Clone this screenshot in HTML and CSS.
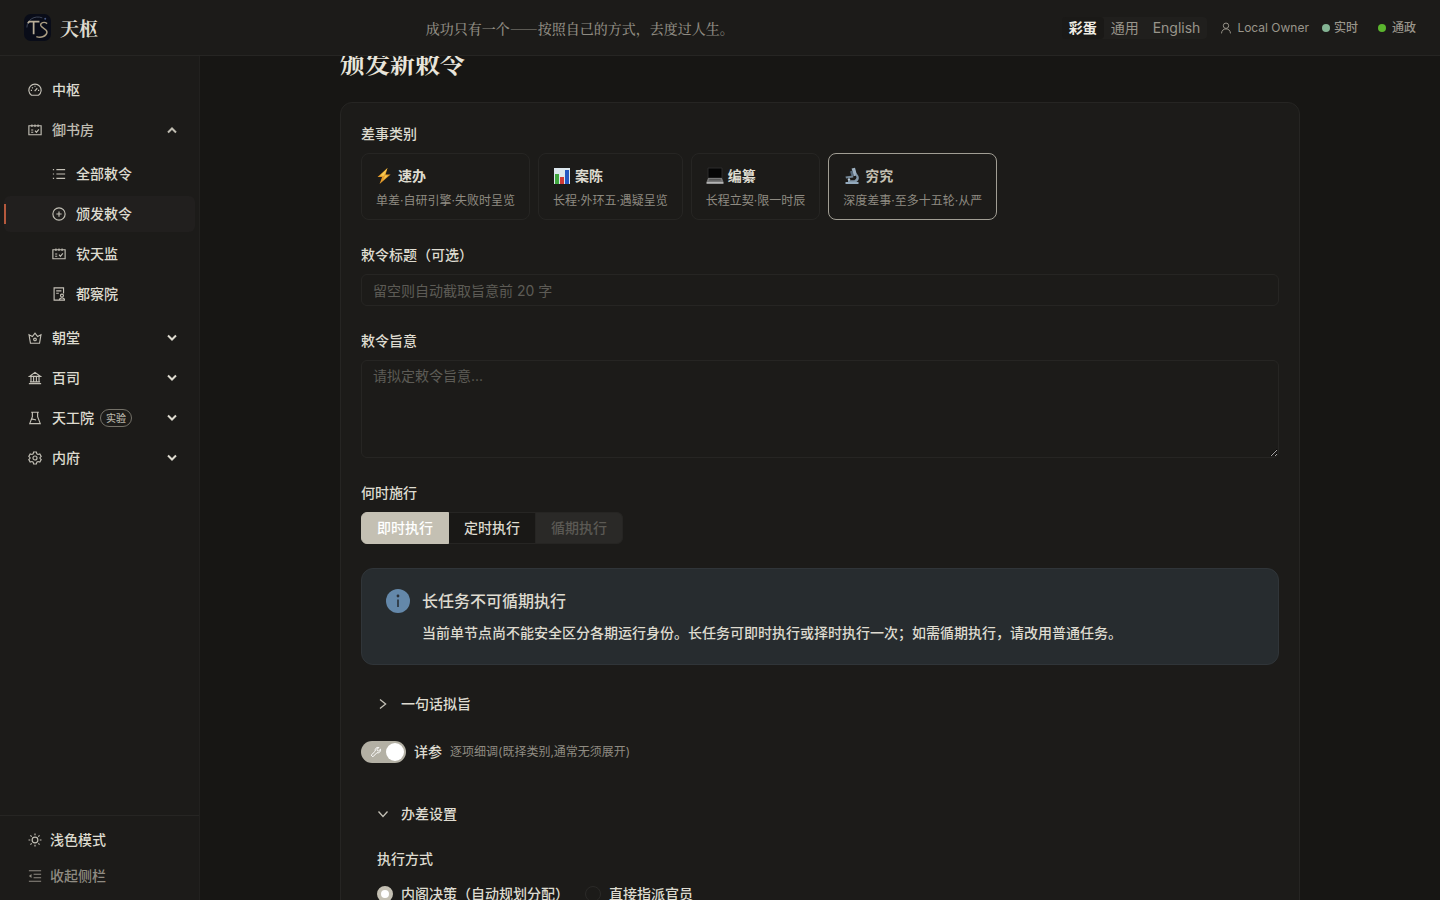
FILE: index.html
```html
<!DOCTYPE html>
<html lang="zh-CN">
<head>
<meta charset="utf-8">
<meta name="viewport" content="width=device-width, initial-scale=1">
<title>天枢 · 颁发新敕令</title>
<link rel="stylesheet" href="styles.css">
</head>
<body>
<svg class="sprite" aria-hidden="true">
  <symbol id="i-dash" viewBox="0 0 16 16"><path d="M4 14A7 7 0 1 1 12 14Z"/><path d="M7.600 9.200 10.600 6M8 3v1.400M3.200 8.400h1.400M11.400 8.400h1.400M4.600 5l1 1"/></symbol>
  <symbol id="i-sched" viewBox="0 0 16 16"><path d="M1 3.200h14v10.200H1zM4.500 1.800v2.800M8 1.800v2.800M11.500 1.800v2.800M3.600 8h2.400M3.600 10.600h2.400M8 8.800l1.600 1.800 2.800-3.400"/></symbol>
  <symbol id="i-list" viewBox="0 0 16 16"><path d="M5 3h10M5 8h10M5 13h10M1 3h1.400M1 8h1.400M1 13h1.400"/></symbol>
  <symbol id="i-plus" viewBox="0 0 16 16"><circle cx="8" cy="8" r="7"/><path d="M8 5v6M5 8h6"/></symbol>
  <symbol id="i-audit" viewBox="0 0 16 16"><path d="M8 15H2.400V1h10.800v6.400M4.800 4.400h6M4.800 7.200h3"/><circle cx="11.400" cy="9.800" r="1.700"/><path d="M8.600 15v-1.200l1.800-1.200h2l1.800 1.200V15Z"/></symbol>
  <symbol id="i-crown" viewBox="0 0 16 16"><path d="M2.800 14 1.200 4.400l3.800 2L8 2.400l3 4 3.800-2L13.200 14Z"/><circle cx="8" cy="9.600" r="1.500"/></symbol>
  <symbol id="i-bank" viewBox="0 0 16 16"><path d="M1.600 6.200 8 1.600l6.400 4.600ZM1 14.400h14M2.200 12.400h11.600M3.400 6.400v6M6.400 6.400v6M9.600 6.400v6M12.600 6.400v6"/></symbol>
  <symbol id="i-flask" viewBox="0 0 16 16"><path d="M3.600 1.400h8.800M5 1.400v5L2 14.400h12l-3-8v-5M4 9.600c2-1 3.400.8 5.200.6"/></symbol>
  <symbol id="i-gear" viewBox="0 0 16 16"><path d="m6.400 1.200h3.200l.5 2 1.400.8 2-.6 1.600 2.800L13.700 7.600v.8l1.400 1.400-1.600 2.800-2-.6-1.400.8-.5 2H6.400l-.5-2-1.400-.8-2 .6L.9 9.800l1.400-1.400v-.8L.9 6.200l1.600-2.800 2 .6 1.400-.8Z"/><circle cx="8" cy="8" r="2.300"/></symbol>
  <symbol id="i-sun" viewBox="0 0 16 16"><circle cx="8" cy="8" r="3.300"/><path d="M8 .6v2M8 13.400v2M.6 8h2M13.400 8h2M2.800 2.800l1.400 1.400M11.800 11.800l1.400 1.400M2.800 13.200l1.400-1.400M11.800 4.200l1.400-1.400"/></symbol>
  <symbol id="i-fold" viewBox="0 0 16 16"><path d="M1 2h14M6.400 6h8.600M6.400 10h8.600M1 14h14"/><path class="solid" d="M1 8l3-2.200v4.400Z"/></symbol>
  <symbol id="i-user" viewBox="0 0 16 16"><circle cx="8" cy="5" r="3.600"/><path d="M2 15.200c.2-3.800 2.600-6 6-6s5.800 2.200 6 6"/></symbol>
  <symbol id="i-down" viewBox="0 0 12 12"><path d="m2 3.500 4 4 4-4"/></symbol>
  <symbol id="i-up" viewBox="0 0 12 12"><path d="m2 8.500 4-4 4 4"/></symbol>
  <symbol id="i-right" viewBox="0 0 12 12"><path d="m3 1.500 5.600 4.500L3 10.500"/></symbol>
  <symbol id="i-expand" viewBox="0 0 12 12"><path d="m1.500 3.500 4.500 5 4.500-5"/></symbol>
  <symbol id="i-tool" viewBox="0 0 16 16"><path d="M1.600 12.200 7 6.800C6.200 4 8.400 1.400 11.800 2L9.400 4.400l.4 1.800 1.800.4L14 4.200c.6 3.400-2 5.600-4.800 4.800l-5.400 5.400Z"/></symbol>
</svg>

<header class="topbar">
  <div class="brand">
    <svg class="logo" viewBox="0 0 28 28" aria-hidden="true">
      <rect width="28" height="28" rx="7" fill="#090c18"/>
      <path d="M3 14C3 6 11 1 19 4" fill="none" stroke="#3f485a" stroke-width="1"/>
      <path d="M4 9.500 5.500 8H16M10 8v13" fill="none" stroke="#b9ae98" stroke-width="1.800"/>
      <path d="M24 10c-3-2.600-7.400-.8-6.600 2 1 2.800 6.800 3.400 6.400 7-.4 4-6 6.200-11 4.400" fill="none" stroke="#a99c82" stroke-width="1.500"/>
      <circle cx="22" cy="5" r="1" fill="#4b5d88"/>
    </svg>
    <span class="brand-name">天枢</span>
  </div>
  <p class="motto">成功只有一个——按照自己的方式，去度过人生。</p>
  <div class="tools">
    <div class="lang">
      <button type="button" class="lang-btn is-active">彩蛋</button>
      <button type="button" class="lang-btn">通用</button>
      <button type="button" class="lang-btn">English</button>
    </div>
    <span class="owner"><svg class="icon"><use href="#i-user"/></svg>Local Owner</span>
    <div class="states">
      <span class="state"><i class="dot dot-live"></i>实时</span>
      <span class="state state-wide"><i class="dot dot-on"></i>通政</span>
    </div>
  </div>
</header>

<div class="shell">
  <aside class="sidebar">
    <nav class="menu">
      <a class="item" href="#"><svg class="icon"><use href="#i-dash"/></svg>中枢</a>
      <a class="item is-open" href="#"><svg class="icon"><use href="#i-sched"/></svg>御书房<svg class="caret"><use href="#i-up"/></svg></a>
      <div class="submenu">
        <a class="item" href="#"><svg class="icon"><use href="#i-list"/></svg>全部敕令</a>
        <a class="item is-current" href="#" aria-current="page"><svg class="icon"><use href="#i-plus"/></svg>颁发敕令</a>
        <a class="item" href="#"><svg class="icon"><use href="#i-sched"/></svg>钦天监</a>
        <a class="item" href="#"><svg class="icon"><use href="#i-audit"/></svg>都察院</a>
      </div>
      <a class="item" href="#"><svg class="icon"><use href="#i-crown"/></svg>朝堂<svg class="caret"><use href="#i-down"/></svg></a>
      <a class="item" href="#"><svg class="icon"><use href="#i-bank"/></svg>百司<svg class="caret"><use href="#i-down"/></svg></a>
      <a class="item" href="#"><svg class="icon"><use href="#i-flask"/></svg>天工院<span class="tag">实验</span><svg class="caret"><use href="#i-down"/></svg></a>
      <a class="item" href="#"><svg class="icon"><use href="#i-gear"/></svg>内府<svg class="caret"><use href="#i-down"/></svg></a>
    </nav>
    <div class="side-foot">
      <button type="button" class="foot-btn"><svg class="icon"><use href="#i-sun"/></svg>浅色模式</button>
      <button type="button" class="foot-btn is-muted"><svg class="icon"><use href="#i-fold"/></svg>收起侧栏</button>
    </div>
  </aside>

  <main class="main">
    <div class="page">
      <h1 class="title">颁发新敕令</h1>
      <form class="card">
        <section class="field">
          <h2 class="label">差事类别</h2>
          <div class="kinds">
            <button type="button" class="kind">
              <span class="kind-name"><svg class="emoji" viewBox="0 0 18 18" aria-hidden="true"><path d="M11.500 1 1.500 10h4.600L3.600 17 14.600 7.600h-5Z" fill="#e39a2a"/><path d="M11.500 1 4 8.800h5.200L7 13l5-4.500H8Z" fill="#f6c94f"/></svg>速办</span>
              <span class="kind-desc">单差·自研引擎·失败时呈览</span>
            </button>
            <button type="button" class="kind">
              <span class="kind-name"><svg class="emoji" viewBox="0 0 18 18" aria-hidden="true"><path d="M1 1h16v16H1z" fill="#dce7ee"/><path d="M2 7h4v10H2z" fill="#3fa63e"/><path d="M7 10h4v7H7z" fill="#d03a35"/><path d="M12 3h4v14h-4z" fill="#2456c2"/></svg>案陈</span>
              <span class="kind-desc">长程·外环五·遇疑呈览</span>
            </button>
            <button type="button" class="kind">
              <span class="kind-name"><svg class="emoji" viewBox="0 0 18 18" aria-hidden="true"><path d="M2 1h14v10H2z" fill="#050505" stroke="#2c2c2c"/><path d="M2 11h14l1.500 4H.5Z" fill="#777"/><path d="M3.500 12h11l.6 1.400H2.900Z" fill="#555"/><path d="M.5 15h17v1.800H.5z" fill="#b4b4b4"/></svg>编纂</span>
              <span class="kind-desc">长程立契·限一时辰</span>
            </button>
            <button type="button" class="kind is-picked" aria-pressed="true">
              <span class="kind-name"><svg class="emoji" viewBox="0 0 18 18" aria-hidden="true"><path d="M8.600 1.600 12 .8l2 7.400-3.400 1Z" fill="#9db0c0"/><path d="m7 4.500 2.400-1 1.500 5-2.300.8Z" fill="#566879"/><path d="M13 6c4 3 3.600 7 .4 9H5v-1.800h6.400c2.600-1.400 2.600-3.600 1-5Z" fill="#8297a9"/><path d="M2.500 9.400 10 8.600l.4 1.900-7.400.9Z" fill="#748797"/><path d="M2.500 15h13v2h-13z" fill="#93a9bc"/><circle cx="6" cy="12.500" r="1.200" fill="#b8c8d4"/></svg>穷究</span>
              <span class="kind-desc">深度差事·至多十五轮·从严</span>
            </button>
          </div>
        </section>

        <div class="field">
          <label class="label" for="edict-title">敕令标题（可选）</label>
          <input class="input" id="edict-title" type="text" placeholder="留空则自动截取旨意前 20 字">
        </div>

        <div class="field">
          <label class="label" for="edict-body">敕令旨意</label>
          <textarea class="input area" id="edict-body" placeholder="请拟定敕令旨意..."></textarea>
        </div>

        <section class="field">
          <h2 class="label">何时施行</h2>
          <div class="segment">
            <button type="button" class="seg is-on">即时执行</button>
            <button type="button" class="seg">定时执行</button>
            <button type="button" class="seg" disabled>循期执行</button>
          </div>
        </section>

        <div class="notice" role="status">
          <svg class="notice-icon" viewBox="0 0 24 24" aria-hidden="true"><circle cx="12" cy="12" r="12" fill="#6488aa"/><circle cx="12" cy="7" r="1.400" fill="#293038"/><path d="M11.200 10.400h1.600V18h-1.600z" fill="#293038"/></svg>
          <div class="notice-text">
            <h3 class="notice-title">长任务不可循期执行</h3>
            <p class="notice-body">当前单节点尚不能安全区分各期运行身份。长任务可即时执行或择时执行一次；如需循期执行，请改用普通任务。</p>
          </div>
        </div>

        <button type="button" class="fold" aria-expanded="false"><svg class="arrow"><use href="#i-right"/></svg>一句话拟旨</button>

        <div class="detail">
          <button type="button" class="switch" role="switch" aria-checked="true" aria-labelledby="detail-label"><svg class="icon"><use href="#i-tool"/></svg><span class="thumb"></span></button>
          <span id="detail-label">详参</span>
          <span class="hint">逐项细调(既择类别,通常无须展开)</span>
        </div>

        <button type="button" class="fold" aria-expanded="true"><svg class="arrow"><use href="#i-expand"/></svg>办差设置</button>
        <fieldset class="mode">
          <legend class="label">执行方式</legend>
          <div class="radios">
            <label class="radio"><input type="radio" name="mode" checked>内阁决策（自动规划分配）</label>
            <label class="radio"><input type="radio" name="mode">直接指派官员</label>
          </div>
        </fieldset>
      </form>
    </div>
  </main>
</div>
</body>
</html>
```
FILE: styles.css
```css
:root {
  color-scheme: dark;
  --surface: #1c1b19;
  --ground: #171614;
  --line: #262523;
  --text: #dedbd0;
  --muted: #8f8b82;
  --accent: #c4c0b3;
}

* { box-sizing: border-box; }

body {
  display: flex;
  flex-direction: column;
  height: 100vh;
  margin: 0;
  overflow: hidden;
  background: var(--ground);
  color: var(--text);
  font: 500 14px/22px Inter, "Noto Sans CJK SC", sans-serif;
}

h1, h2, h3, p { margin: 0; font-weight: 500; }
button { margin: 0; padding: 0; border: 0; background: none; color: inherit; font: inherit; cursor: pointer; }
a { color: inherit; text-decoration: none; }

.sprite { display: none; }
symbol { fill: none; stroke: currentColor; stroke-width: 1.3; }
.solid { fill: currentColor; stroke: none; }
.icon { flex: none; width: 14px; height: 14px; color: #c3c0b6; }

/* Top bar */
.topbar {
  display: flex;
  flex: none;
  align-items: center;
  justify-content: space-between;
  height: 56px;
  padding: 0 24px;
  border-bottom: 1px solid var(--line);
  background: var(--surface);
}
.brand { display: flex; align-items: center; gap: 9px; }
.logo { width: 27px; height: 27px; }
.brand-name {
  font: 700 19px/28px "Noto Serif CJK SC", "Noto Sans CJK SC", serif;
}
.motto {
  color: var(--muted);
  font: 500 14px/20px "Noto Serif CJK SC", "Noto Sans CJK SC", serif;
}
.tools { display: flex; align-items: center; gap: 13px; color: #99958b; font-size: 12px; }
.lang { display: flex; border-radius: 4px; background: #201f1d; font-size: 14px; font-weight: 400; }
.lang-btn { padding: 0 7px; border-radius: 4px; }
.lang-btn.is-active { background: #1a1917; color: #eeece4; font-weight: 700; }
.owner { display: flex; align-items: center; gap: 5px; font-weight: 400; }
.owner .icon { width: 12px; height: 12px; color: inherit; }
.states { display: flex; gap: 20px; }
.state { display: flex; align-items: center; gap: 4px; }
.state-wide { gap: 6px; }
.dot { width: 8px; height: 8px; border-radius: 50%; }
.dot-live { background: #84b494; }
.dot-on { background: #5bb52e; }

/* Sidebar */
.shell { display: flex; flex: 1; min-height: 0; }
.sidebar {
  display: flex;
  flex: none;
  flex-direction: column;
  justify-content: space-between;
  width: 200px;
  border-right: 1px solid #22211f;
  background: var(--surface);
}
.menu { display: flex; flex-direction: column; gap: 4px; padding: 16px 4px; }
.submenu { display: flex; flex-direction: column; gap: 4px; padding: 4px 0; }
.item {
  display: flex;
  align-items: center;
  height: 36px;
  padding: 0 17px 0 24px;
  border-radius: 6px;
}
.item .icon { margin-right: 10px; }
.is-open { color: #bfbcb1; }
.submenu .item { padding-left: 48px; }
.is-current { position: relative; background: #211f1e; }
.is-current::before {
  position: absolute;
  top: 8px;
  left: 0;
  width: 2px;
  height: 20px;
  background: #b5593d;
  content: "";
}
.caret { width: 12px; height: 12px; margin-left: auto; }
#i-down, #i-up { stroke-width: 2; }
.tag {
  margin-left: 6px;
  padding: 0 5px;
  border: 1px solid #747168;
  border-radius: 9px;
  color: #b5b2a7;
  font-size: 10px;
  line-height: 16px;
}
.side-foot { display: flex; flex-direction: column; padding: 6px 28px; border-top: 1px solid var(--line); }
.foot-btn { display: flex; align-items: center; gap: 8px; height: 36px; }
.foot-btn.is-muted, .is-muted .icon { color: var(--muted); }

/* Page */
.main { flex: 1; min-width: 0; overflow: hidden; }
.page { max-width: 960px; margin: -10px auto 0; }
.title {
  margin-bottom: 24px;
  color: #e8e5db;
  font: 700 25px/32px "Noto Serif CJK SC", "Noto Sans CJK SC", serif;
}
.card { padding: 20px; border: 1px solid var(--line); border-radius: 12px; background: var(--surface); }
.field { display: flex; flex-direction: column; gap: 8px; margin-bottom: 24px; }
.label { padding: 0; font-size: 14px; line-height: 22px; }

.kinds { display: flex; flex-wrap: wrap; gap: 8px; }
.kind {
  display: flex;
  flex-direction: column;
  gap: 3px;
  padding: 10px 14px 8px;
  border: 1px solid var(--line);
  border-radius: 8px;
  text-align: left;
}
.kind.is-picked { border-color: #a19e94; }
.kind-name { display: flex; align-items: center; gap: 4px; font-weight: 700; line-height: 24px; }
.kind.is-picked .kind-name { color: var(--accent); }
.kind-desc { color: var(--muted); font-size: 12px; font-weight: 400; line-height: 20px; }
.emoji { width: 18px; height: 18px; }

.input {
  width: 100%;
  height: 32px;
  margin: 0;
  padding: 4px 11px;
  border: 1px solid var(--line);
  border-radius: 6px;
  background: transparent;
  color: inherit;
  font: inherit;
  font-weight: 400;
}
.input::placeholder { color: #5d5b56; }
.area { display: block; height: 98px; resize: vertical; }

.segment { display: flex; }
.seg { height: 32px; padding: 0 15px; border: 1px solid var(--line); background: #191816; }
.seg + .seg { margin-left: -1px; }
.seg:first-child { border-radius: 6px 0 0 6px; }
.seg:last-child { border-radius: 0 6px 6px 0; }
.seg.is-on { z-index: 1; border-color: var(--accent); background: var(--accent); color: #fff; }
.seg:disabled { background: #2a2927; color: #5b5954; cursor: default; }

.notice {
  display: flex;
  gap: 12px;
  padding: 20px 24px;
  border: 1px solid #303539;
  border-radius: 12px;
  background: #272c2f;
}
.notice-icon { flex: none; width: 24px; height: 24px; }
.notice-title { margin-bottom: 8px; font-size: 16px; line-height: 24px; }
.notice-body { line-height: 23px; }

.fold { display: flex; align-items: center; gap: 12px; width: 100%; margin: 16px 0 14px; padding: 12px 16px; text-align: left; }
.arrow { width: 12px; height: 12px; color: #c3c0b6; }
.detail { display: flex; align-items: center; gap: 8px; margin-bottom: 28px; }
.detail + .fold { margin: 0; }
.switch {
  display: flex;
  align-items: center;
  justify-content: space-between;
  width: 45px;
  height: 22px;
  padding: 0 2px 0 9px;
  border-radius: 11px;
  background: #b3b0a4;
}
.switch .icon { width: 12px; height: 12px; color: #fff; }
.thumb { width: 18px; height: 18px; border-radius: 50%; background: #fff; }
.hint { color: var(--muted); font-size: 12px; font-weight: 400; }

.mode { margin: 11px 0 0; padding: 0 16px; border: 0; }
.radios { display: flex; flex-wrap: wrap; gap: 16px; padding-top: 13px; }
.radio { display: flex; align-items: center; gap: 8px; }
.radio input {
  width: 16px;
  height: 16px;
  margin: 0;
  border: 1px solid #2b2a28;
  border-radius: 50%;
  appearance: none;
}
.radio input:checked { border: 4px solid var(--accent); background: #fff; }
```
